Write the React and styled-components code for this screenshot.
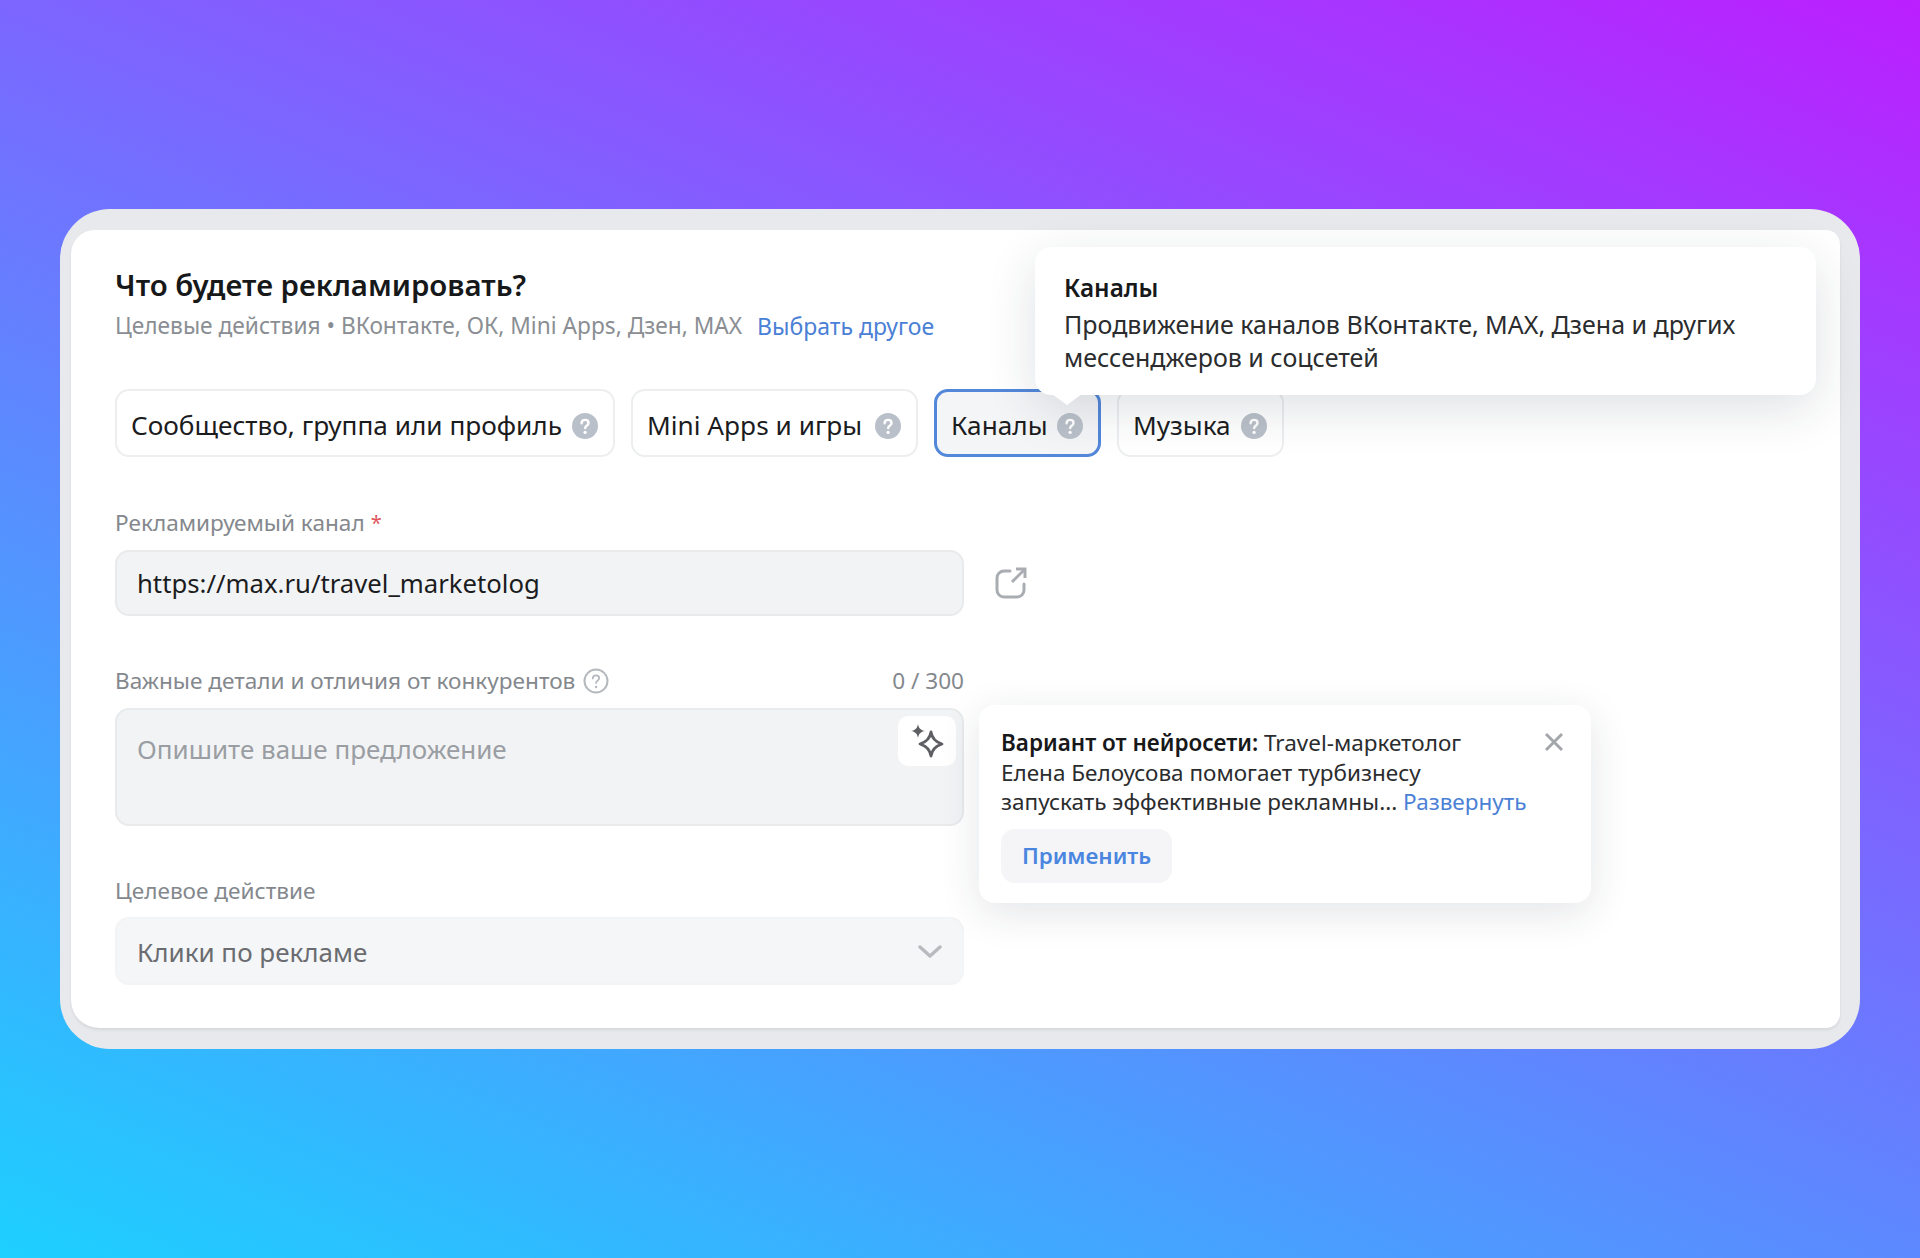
import React from 'react';
import styled, { createGlobalStyle } from 'styled-components';

const GlobalStyle = createGlobalStyle`
  html, body {
    margin: 0;
    padding: 0;
  }
  body {
    font-family: "Noto Sans", "Open Sans", sans-serif;
    color: #1b1c1e;
  }
`;

const Page = styled.div`
  box-sizing: border-box;
  width: 1920px;
  height: 1258px;
  padding: 209px 60px;
  background: linear-gradient(23.6deg, #1dd0ff 0%, #bb1fff 100%);
`;

const Frame = styled.div`
  box-sizing: border-box;
  height: 840px;
  padding: 21px 20px 21px 11px;
  border-radius: 50px;
  background: #e7e9ec;
`;

const Panel = styled.div`
  position: relative;
  box-sizing: border-box;
  height: 798px;
  padding: 36px 44px 0;
  border-radius: 24px 14px 14px 28px;
  background: #fff;
  box-shadow: 0 2px 3px rgba(0, 0, 0, 0.08);
`;

const Title = styled.h2`
  margin: 0;
  font-size: 29.4px;
  line-height: 38px;
  font-weight: 600;
  color: #17181a;
`;

const Sub = styled.div`
  display: flex;
  align-items: center;
  gap: 15px;
  margin-top: 7px;
  font-size: 22.7px;
  line-height: 30px;
  color: #8a8e93;
`;

const Link = styled.a`
  color: #4a80d6;
`;

const SubLink = styled(Link)`
  font-size: 23px;
`;

const Tabs = styled.div`
  display: flex;
  margin-top: 48px;
`;

const Tab = styled.div`
  box-sizing: border-box;
  display: flex;
  align-items: center;
  justify-content: space-between;
  width: ${(p) => p.$width}px;
  height: 68px;
  margin-right: ${(p) => p.$gap}px;
  padding: 3px 15px 0 14px;
  border: ${(p) => (p.$active ? '3px solid #5287da' : '2px solid #eceef0')};
  border-radius: 14px;
  background: ${(p) => (p.$active ? '#f4f5f7' : '#fff')};
  font-size: 26.2px;
  color: #1b1c1e;
  white-space: nowrap;

  svg {
    margin-top: 3px;
  }
`;

const FieldLabel = styled.div`
  display: flex;
  align-items: center;
  justify-content: space-between;
  width: 849px;
  margin-top: ${(p) => p.$top || 52}px;
  font-size: 22.6px;
  line-height: 28px;
  color: #84888d;
`;

const LabelStart = styled.span`
  display: flex;
  align-items: center;
  gap: 8px;
`;

const Required = styled.span`
  margin-left: -2px;
  font-size: 20px;
  color: #e0535c;
`;

const FieldRow = styled.div`
  display: flex;
  align-items: center;
  gap: 31px;
  margin-top: ${(p) => p.$gap || 13}px;
`;

const Input = styled.div`
  box-sizing: border-box;
  display: flex;
  align-items: ${(p) => (p.$tall ? 'flex-start' : 'center')};
  justify-content: space-between;
  width: 849px;
  height: ${(p) => p.$height}px;
  padding: ${(p) => (p.$tall ? '6px 6px 0 20px' : '1px 20px 0 20px')};
  border: 2px solid ${(p) => p.$border || '#e8eaec'};
  border-radius: 14px;
  background: ${(p) => p.$bg || '#f2f3f5'};
  font-size: ${(p) => p.$size || 26}px;
  color: ${(p) => p.$color || '#1b1c1e'};
`;

const Placeholder = styled.span`
  margin-top: 15px;
  color: #9a9ea3;
`;

const SparkleButton = styled.div`
  display: flex;
  align-items: center;
  justify-content: center;
  width: 58px;
  height: 50px;
  border-radius: 10px;
  background: #fff;
`;

const Tooltip = styled.div`
  position: absolute;
  z-index: 2;
  left: 964px;
  top: 17px;
  box-sizing: border-box;
  width: 781px;
  height: 148px;
  padding: 24px 29px;
  border-radius: 16px;
  background: #fff;
  box-shadow: 0 14px 50px rgba(30, 40, 60, 0.14);
  font-size: 25px;
  line-height: 33px;
  color: #2b2c2e;

  &::after {
    content: '';
    position: absolute;
    left: 17px;
    bottom: -10px;
    border-left: 15px solid transparent;
    border-right: 15px solid transparent;
    border-top: 11px solid #fff;
  }
`;

const TooltipTitle = styled.div`
  margin-bottom: 4px;
  font-size: 24.3px;
  font-weight: 600;
  color: #17181a;
`;

const Popup = styled.div`
  position: absolute;
  z-index: 2;
  left: 908px;
  top: 475px;
  box-sizing: border-box;
  width: 612px;
  height: 198px;
  padding: 23px 22px;
  border-radius: 16px;
  background: #fff;
  box-shadow: 0 10px 40px rgba(30, 40, 60, 0.12);
  font-size: 22.5px;
  line-height: 29.5px;
  color: #2b2c2e;
`;

const PopupStrong = styled.strong`
  font-weight: 600;
  color: #17181a;
`;

const ApplyButton = styled.div`
  display: flex;
  align-items: center;
  justify-content: center;
  width: 171px;
  height: 53px;
  margin-top: 12px;
  padding-top: 1px;
  border-radius: 14px;
  background: #f5f5f7;
  font-size: 22.4px;
  font-weight: 600;
  color: #4a86e0;
`;

const Close = styled.svg`
  position: absolute;
  top: 27px;
  right: 27px;
`;

const HelpIcon = () => (
  <svg width="26" height="26" viewBox="0 0 26 26">
    <circle cx="13" cy="13" r="13" fill="#bac0c9" />
    <path d="M9.600 10.200c0-2 1.500-3.300 3.500-3.300s3.400 1.200 3.400 3c0 1.400-.8 2.100-1.800 2.800-1 .7-1.500 1.200-1.500 2.400" fill="none" stroke="#fff" strokeWidth="2.400" strokeLinecap="round" />
    <circle cx="13.100" cy="19.400" r="1.600" fill="#fff" />
  </svg>
);

const HelpOutline = () => (
  <svg width="26" height="26" viewBox="0 0 26 26">
    <circle cx="13" cy="13" r="11.500" fill="none" stroke="#b5b9be" strokeWidth="2" />
    <path d="M9.800 10.400c0-1.900 1.400-3.100 3.200-3.100s3.200 1.100 3.200 2.800c0 1.300-.8 2-1.700 2.600-.9.600-1.400 1.200-1.400 2.400" fill="none" stroke="#b5b9be" strokeWidth="1.800" strokeLinecap="round" />
    <circle cx="13.100" cy="19" r="1.200" fill="#b5b9be" />
  </svg>
);

const ExternalIcon = () => (
  <svg width="32" height="32" viewBox="0 0 32 32" fill="none" stroke="#a9adb2" strokeWidth="3" strokeLinecap="round" strokeLinejoin="round">
    <path d="M15 4H9a7 7 0 0 0-7 7v12a7 7 0 0 0 7 7h13a7 7 0 0 0 7-7v-6" />
    <path d="M17 15 30 2" strokeLinecap="butt" />
    <path d="M21 2h9v9" strokeLinecap="butt" strokeLinejoin="miter" />
  </svg>
);

const SparkleIcon = () => (
  <svg width="36" height="36" viewBox="0 0 36 36">
    <path d="M9 1c.7 4.300 2.700 6.300 7 7-4.300.7-6.300 2.700-7 7-.7-4.300-2.700-6.300-7-7 4.300-.7 6.300-2.700 7-7z" fill="#5d5f63" />
    <path d="M22 9c1 6.500 4.500 10 11 12-6.500 2-10 5.500-11 12-1-6.500-4.500-10-11-12 6.500-2 10-5.500 11-12z" fill="#fff" stroke="#5d5f63" strokeWidth="2.800" strokeLinejoin="round" />
  </svg>
);

const Chevron = () => (
  <svg width="24" height="13" viewBox="0 0 24 13" fill="none" stroke="#b7babf" strokeWidth="3.400" strokeLinecap="round" strokeLinejoin="round">
    <path d="M2 2l10 9 10-9" />
  </svg>
);

const tabs = [
  { label: 'Сообщество, группа или профиль', width: 500, gap: 16 },
  { label: 'Mini Apps и игры', width: 287, gap: 16 },
  { label: 'Каналы', width: 167, gap: 16, active: true },
  { label: 'Музыка', width: 167, gap: 0 },
];

export default function App() {
  return (
    <>
      <GlobalStyle />
      <Page>
        <Frame>
          <Panel>
            <Title>Что будете рекламировать?</Title>
            <Sub>
              <span>Целевые действия • ВКонтакте, ОК, Mini Apps, Дзен, MAX</span>
              <SubLink>Выбрать другое</SubLink>
            </Sub>

            <Tabs>
              {tabs.map((tab) => (
                <Tab key={tab.label} $active={tab.active} $width={tab.width} $gap={tab.gap}>
                  {tab.label}
                  <HelpIcon />
                </Tab>
              ))}
            </Tabs>

            <FieldLabel>
              <LabelStart>
                Рекламируемый канал <Required>*</Required>
              </LabelStart>
            </FieldLabel>
            <FieldRow>
              <Input $height={66} $size={25.7}>https://max.ru/travel_marketolog</Input>
              <ExternalIcon />
            </FieldRow>

            <FieldLabel $top={51}>
              <LabelStart>
                Важные детали и отличия от конкурентов <HelpOutline />
              </LabelStart>
              <span>0 / 300</span>
            </FieldLabel>
            <FieldRow $gap={13}>
              <Input $height={118} $tall>
                <Placeholder>Опишите ваше предложение</Placeholder>
                <SparkleButton>
                  <SparkleIcon />
                </SparkleButton>
              </Input>
            </FieldRow>

            <FieldLabel $top={51}>Целевое действие</FieldLabel>
            <FieldRow $gap={12}>
              <Input $height={68} $bg="#f5f6f8" $border="#f3f4f6" $color="#6a6c70">
                Клики по рекламе
                <Chevron />
              </Input>
            </FieldRow>

            <Tooltip>
              <TooltipTitle>Каналы</TooltipTitle>
              Продвижение каналов ВКонтакте, MAX, Дзена и других
              <br />
              мессенджеров и соцсетей
            </Tooltip>

            <Popup>
              <PopupStrong>Вариант от нейросети:</PopupStrong> Travel-маркетолог
              <br />
              Елена Белоусова помогает турбизнесу
              <br />
              запускать эффективные рекламны... <Link>Развернуть</Link>
              <ApplyButton>Применить</ApplyButton>
              <Close width="20" height="20" viewBox="0 0 20 20" fill="none" stroke="#a3a7ac" strokeWidth="3">
                <path d="M2 2l16 16M18 2 2 18" />
              </Close>
            </Popup>
          </Panel>
        </Frame>
      </Page>
    </>
  );
}
